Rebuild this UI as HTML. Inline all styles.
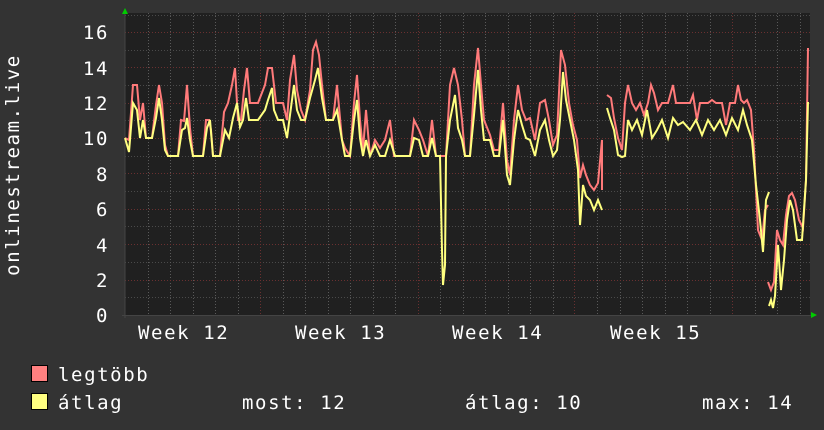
<!DOCTYPE html>
<html><head><meta charset="utf-8"><style>
html,body{margin:0;padding:0;background:#333333;}
body{width:824px;height:430px;overflow:hidden;position:relative;font-family:"DejaVu Sans Mono","Liberation Mono",monospace;color:#fff;}
</style></head><body>
<svg width="824" height="430" viewBox="0 0 824 430" xmlns="http://www.w3.org/2000/svg" style="position:absolute;left:0;top:0">
<rect width="824" height="430" fill="#333333"/>
<rect x="125" y="13" width="685" height="302" fill="#202020"/>
<g stroke="#4a4a4a" stroke-width="1" stroke-dasharray="1,2">
<line x1="125" x2="810" y1="297.5" y2="297.5"/><line x1="125" x2="810" y1="262.5" y2="262.5"/>
<line x1="125" x2="810" y1="226.5" y2="226.5"/><line x1="125" x2="810" y1="191.5" y2="191.5"/>
<line x1="125" x2="810" y1="156.5" y2="156.5"/><line x1="125" x2="810" y1="120.5" y2="120.5"/>
<line x1="125" x2="810" y1="85.5" y2="85.5"/><line x1="125" x2="810" y1="50.5" y2="50.5"/>
<line x1="125" x2="810" y1="15.5" y2="15.5"/>
</g>
<g stroke="#5a5a5a" stroke-width="1" stroke-dasharray="1,2">
<line x1="148.5" x2="148.5" y1="13" y2="315"/><line x1="170.5" x2="170.5" y1="13" y2="315"/>
<line x1="193.5" x2="193.5" y1="13" y2="315"/><line x1="215.5" x2="215.5" y1="13" y2="315"/>
<line x1="238.5" x2="238.5" y1="13" y2="315"/><line x1="283.5" x2="283.5" y1="13" y2="315"/>
<line x1="305.5" x2="305.5" y1="13" y2="315"/><line x1="328.5" x2="328.5" y1="13" y2="315"/>
<line x1="350.5" x2="350.5" y1="13" y2="315"/><line x1="373.5" x2="373.5" y1="13" y2="315"/>
<line x1="395.5" x2="395.5" y1="13" y2="315"/><line x1="440.5" x2="440.5" y1="13" y2="315"/>
<line x1="463.5" x2="463.5" y1="13" y2="315"/><line x1="485.5" x2="485.5" y1="13" y2="315"/>
<line x1="508.5" x2="508.5" y1="13" y2="315"/><line x1="530.5" x2="530.5" y1="13" y2="315"/>
<line x1="553.5" x2="553.5" y1="13" y2="315"/><line x1="597.5" x2="597.5" y1="13" y2="315"/>
<line x1="620.5" x2="620.5" y1="13" y2="315"/><line x1="642.5" x2="642.5" y1="13" y2="315"/>
<line x1="665.5" x2="665.5" y1="13" y2="315"/><line x1="687.5" x2="687.5" y1="13" y2="315"/>
<line x1="710.5" x2="710.5" y1="13" y2="315"/><line x1="755.5" x2="755.5" y1="13" y2="315"/>
<line x1="777.5" x2="777.5" y1="13" y2="315"/><line x1="800.5" x2="800.5" y1="13" y2="315"/>
</g>
<g stroke="#6a3030" stroke-width="1" stroke-dasharray="1,2">
<line x1="125" x2="810" y1="280.5" y2="280.5"/><line x1="125" x2="810" y1="244.5" y2="244.5"/>
<line x1="125" x2="810" y1="209.5" y2="209.5"/><line x1="125" x2="810" y1="173.5" y2="173.5"/>
<line x1="125" x2="810" y1="138.5" y2="138.5"/><line x1="125" x2="810" y1="103.5" y2="103.5"/>
<line x1="125" x2="810" y1="67.5" y2="67.5"/><line x1="125" x2="810" y1="32.5" y2="32.5"/>
<line x1="260.5" x2="260.5" y1="13" y2="315"/><line x1="418.5" x2="418.5" y1="13" y2="315"/>
<line x1="574.5" x2="574.5" y1="13" y2="315"/><line x1="732.5" x2="732.5" y1="13" y2="315"/>
</g>
<line x1="125" y1="10" x2="125" y2="318" stroke="#444" stroke-width="1"/>
<line x1="122" y1="315.5" x2="812" y2="315.5" stroke="#444" stroke-width="1"/>
<polygon points="122,14 128,14 125,8" fill="#00cc00"/>
<polygon points="811,312 811,318 817,315" fill="#00cc00"/>
<g fill="none" stroke-width="2" stroke-linejoin="miter">
<polyline stroke="#ff7a7a" points="125,138 129,140 133,85 137,85 140,120 143,103 146,138 152,138 156,105 159,85 162,103 165,145 168,156 178,156 181,120 184,121 187,85 190,128 193,156 203,156 206,120 209,120 211,130 213,156 220,156 224,112 228,103 232,85 235,68 238,120 241,120 244,90 247,68 250,103 253,103 258,103 265,85 268,68 272,68 276,103 280,103 283,103 287,120 290,80 294,55 297,90 301,110 305,120 310,90 313,50 316,42 319,55 322,85 326,120 333,120 337,85 342,140 345,148 350,156 354,103 357,75 360,120 363,150 366,110 370,156 375,140 380,148 385,140 390,120 394,156 410,156 414,120 419,130 423,140 428,156 432,120 436,156 442,156 446,156 450,85 454,68 458,85 462,120 465,156 470,156 474,85 478,48 481,85 484,120 490,135 494,150 499,150 503,103 507,160 510,175 514,120 518,85 522,110 526,120 530,118 535,140 540,103 545,100 549,120 553,145 557,135 561,50 565,65 569,103 573,125 577,140 580,178 583,165 586,175 590,185 594,190 598,183 602,140 602,190 "/>
<polyline stroke="#ff7a7a" points="607,95 611,98 614,118 618,138 622,150 625,103 628,85 632,103 636,110 640,103 644,115 648,103 651,85 654,93 658,110 662,103 668,103 673,85 676,103 680,103 684,103 690,103 693,95 697,120 700,103 704,103 708,103 712,100 716,103 722,103 726,125 730,103 735,103 738,85 741,100 744,103 747,100 751,110 754,150 758,230 762,240 765,210 768,205"/>
<polyline stroke="#ff7a7a" points="768,282 771,290 774,282 777,230 780,240 783,245 786,215 789,196 792,193 795,200 799,220 803,228 806,180 808,48"/>
<polyline stroke="#ffff80" points="125,138 129,152 133,103 137,110 140,138 143,120 146,138 152,138 156,118 159,98 162,120 165,150 168,156 178,156 182,130 185,128 187,118 190,140 193,156 203,156 207,128 210,120 213,156 220,156 225,130 229,138 233,118 237,103 240,127 243,120 246,98 249,120 253,120 258,120 265,110 268,100 272,88 274,110 278,120 283,120 287,138 290,115 294,85 297,110 301,120 305,120 310,98 315,80 318,68 322,98 326,120 333,120 337,110 342,140 345,156 350,156 354,120 357,100 360,138 363,156 366,140 370,156 375,145 380,156 385,156 390,140 395,156 410,156 414,138 419,140 423,156 428,156 432,138 436,156 440,156 442,250 443,285 445,265 446,156 450,120 455,95 458,128 462,140 465,156 470,156 474,115 478,70 481,110 484,140 490,140 494,156 499,156 503,120 507,175 510,185 514,140 518,110 522,125 526,138 530,140 535,156 540,130 545,120 549,140 553,156 557,150 560,120 563,72 566,100 570,120 574,140 578,170 580,225 583,185 586,196 590,200 594,210 598,200 602,210"/>
<polyline stroke="#ffff80" points="607,108 610,118 614,130 618,155 622,157 625,156 628,120 632,130 637,120 642,135 647,110 652,138 657,130 662,120 668,138 673,118 678,125 683,122 690,130 696,120 702,135 708,120 714,130 720,120 726,135 732,118 738,130 743,110 747,125 752,140 756,185 760,220 763,252 766,200 769,192"/>
<polyline stroke="#ffff80" points="769,306 771,300 773,308 775,296 778,245 781,290 784,260 787,220 790,200 793,210 797,240 802,240 806,180 808,102"/>
</g>
<g font-family="DejaVu Sans Mono, Liberation Mono, monospace" font-size="19" fill="#ffffff" text-anchor="end" letter-spacing="1.6">
<text x="109" y="39">16</text><text x="109" y="75">14</text><text x="109" y="110">12</text>
<text x="109" y="145">10</text><text x="109" y="181">8</text><text x="109" y="216">6</text>
<text x="109" y="252">4</text><text x="109" y="287">2</text><text x="109" y="322">0</text>
</g>
<g font-family="DejaVu Sans Mono, Liberation Mono, monospace" font-size="19" fill="#ffffff" letter-spacing="1.6">
<text x="138" y="339">Week 12</text><text x="295" y="339">Week 13</text>
<text x="452" y="339">Week 14</text><text x="610" y="339">Week 15</text>
</g>
<text transform="translate(19,165) rotate(-90)" font-family="DejaVu Sans Mono, Liberation Mono, monospace" font-size="19" fill="#ffffff" text-anchor="middle" letter-spacing="1.6">onlinestream.live</text>
<rect x="31.5" y="365.5" width="16" height="16" fill="#ff8080" stroke="#000"/>
<rect x="31.5" y="393.5" width="16" height="16" fill="#ffff80" stroke="#000"/>
<g font-family="DejaVu Sans Mono, Liberation Mono, monospace" font-size="19" fill="#ffffff" letter-spacing="1.6">
<text x="58" y="381">legtöbb</text>
<text x="58" y="409">átlag</text>
<text x="242" y="409">most: 12</text>
<text x="465" y="409">átlag: 10</text>
<text x="702" y="409">max: 14</text>
</g>
</svg>
</body></html>
